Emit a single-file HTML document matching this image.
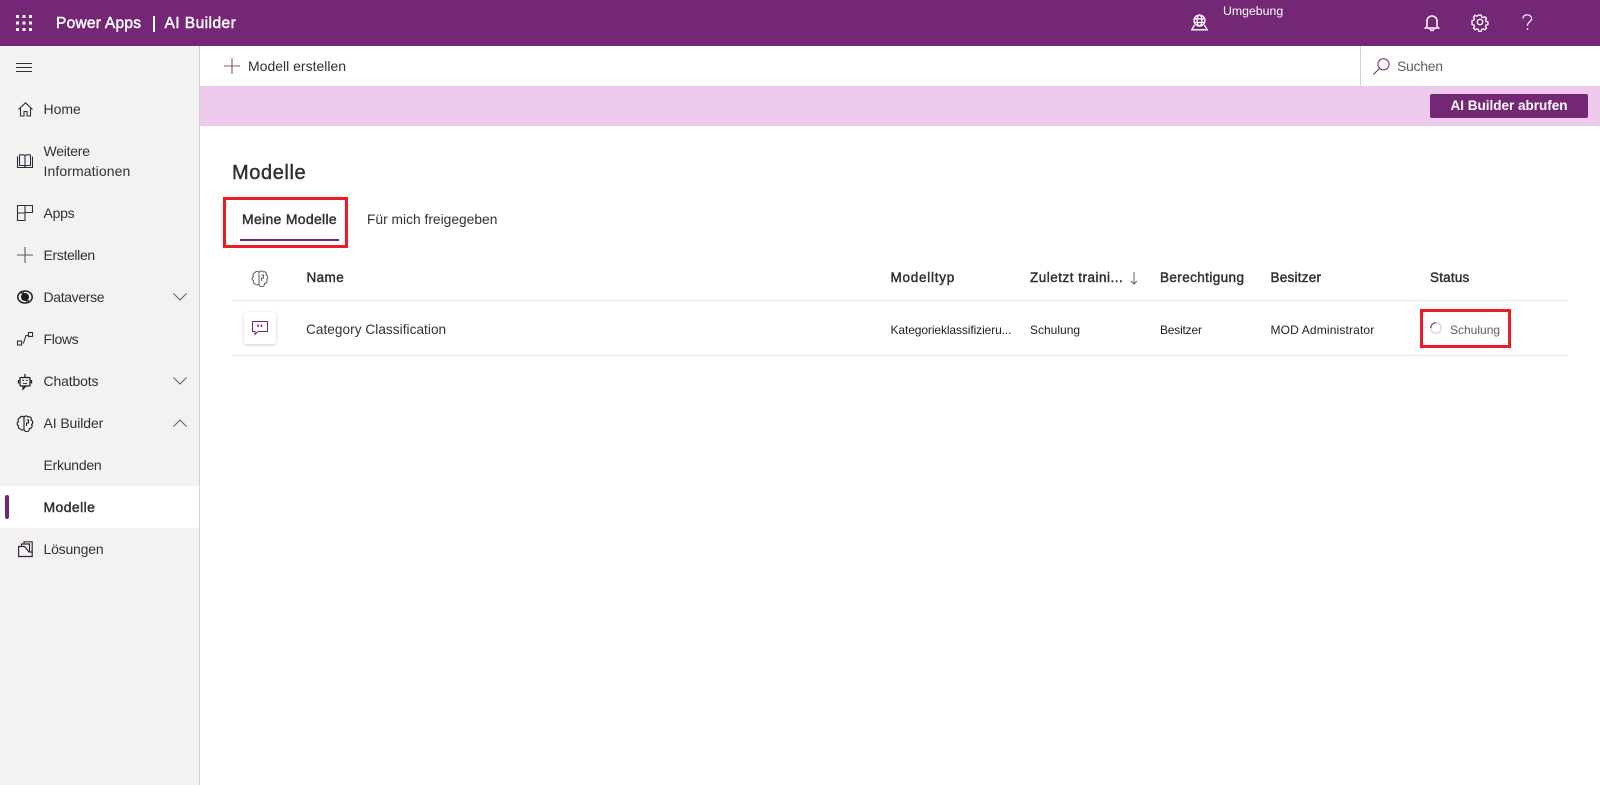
<!DOCTYPE html>
<html lang="de">
<head>
<meta charset="utf-8">
<title>AI Builder</title>
<style>
html,body{margin:0;padding:0;width:1600px;height:785px;overflow:hidden;background:#fff;font-family:"Liberation Sans",Arial,sans-serif;color:#323130}
.a{position:absolute}
.t{position:absolute;white-space:nowrap;line-height:20px;font-size:14px;height:20px}
.s{-webkit-text-stroke:.45px currentColor}
svg{position:absolute;overflow:visible;fill:none}
</style>
</head>
<body>
<div class="a" style="left:0;top:0;width:1600px;height:46px;background:#742774"></div>
<svg style="left:16px;top:15px" width="16" height="16"><g fill="#fff"><rect x="0" y="0" width="3" height="3"/><rect x="6.500" y="0" width="3" height="3"/><rect x="13" y="0" width="3" height="3"/><rect x="0" y="6.500" width="3" height="3"/><rect x="6.500" y="6.500" width="3" height="3"/><rect x="13" y="6.500" width="3" height="3"/><rect x="0" y="13" width="3" height="3"/><rect x="6.500" y="13" width="3" height="3"/><rect x="13" y="13" width="3" height="3"/></g></svg>
<div class="t s" style="left:56px;top:13.500px;color:#fff;font-size:15.500px;letter-spacing:.25px">Power Apps</div>
<div class="a" style="left:153px;top:16px;width:1.500px;height:16px;background:#fff"></div>
<div class="t s" style="left:164.500px;top:13.500px;color:#fff;font-size:15.500px;letter-spacing:.45px">AI Builder</div>
<svg style="left:1191px;top:14px" width="17" height="17" stroke="#fff" stroke-width="1.300"><circle cx="8.500" cy="6.500" r="5.500"/><ellipse cx="8.500" cy="6.500" rx="2.400" ry="5.500"/><path d="M3.200 4.800H13.800M3.200 8.500H13.800M3.500 11L.8 15.800H16.200L13.500 11"/></svg>
<div class="t" style="left:1223px;top:1px;color:#fff;font-size:12.300px">Umgebung</div>
<svg style="left:1424px;top:14px" width="16" height="18" stroke="#fff" stroke-width="1.500"><path d="M3 12.500V7a5 5 0 0 1 10 0v5.500l1.500 1.500H1.500zM6 14.500a2 2 0 0 0 4 0"/></svg>
<svg style="left:1472px;top:14px" width="16" height="16" stroke="#fff" stroke-width="1.400"><circle cx="8" cy="8" r="2.700"/><path d="M6.700 .7h2.600l.4 2 1.500.7 1.800-1 1.800 1.800-1 1.800.6 1.500 2 .5v2.600l-2 .5-.6 1.500 1 1.800-1.800 1.800-1.800-1-1.500.6-.4 2H6.700l-.4-2-1.500-.6-1.800 1-1.800-1.800 1-1.800-.6-1.500-2-.5V6.500l2-.5.6-1.500-1-1.800L2.700 .9l1.800 1 1.500-.7z" transform="translate(.4 .4) scale(.95)"/></svg>
<svg style="left:1522px;top:14px" width="11" height="17" stroke="#fff" stroke-width="1.200"><path d="M1 4.500C1 2 3 .8 5.200 .8C7.800 .8 9.600 2.500 9.600 4.600C9.600 7.600 5.500 8 5.500 11.800"/><circle cx="5.500" cy="15" r=".9" fill="#fff" stroke="none"/></svg>

<div class="a" style="left:0;top:46px;width:199px;height:739px;background:#f3f2f1;border-right:1px solid #d2d0ce"></div>
<svg style="left:16px;top:63px" width="16" height="10" stroke="#323130" stroke-width="1"><path d="M0 .5H16M0 4.500H16M0 8.500H16"/></svg>

<svg style="left:18px;top:102px" width="15" height="15" stroke="#323130" stroke-width="1.100"><path d="M.5 7.500L7.500 .8L14.500 7.500M2.500 6V14H6V9.500H9V14H12.500V6"/></svg>
<div class="t" style="left:43.500px;top:99px">Home</div>

<svg style="left:17px;top:154px" width="16" height="14" stroke="#322b40" stroke-width="1.100"><path d="M.5 2.500V13.500H15.500V2.500"/><path d="M2.500 .8H6Q8 .8 8 2.500V13.500M2.500 .8V11.500H6.500Q8 11.500 8 13.500M13.500 .8H10Q8 .8 8 2.500M13.500 .8V11.500H9.500Q8 11.500 8 13.500"/></svg>
<div class="t" style="left:43.500px;top:141px;letter-spacing:-.25px">Weitere</div>
<div class="t" style="left:43.500px;top:161px;letter-spacing:.1px">Informationen</div>

<svg style="left:17px;top:205px" width="16" height="16" stroke="#323130" stroke-width="1.100"><path d="M.5 .5H15.500V7.500H8V15.500H.5zM.5 8H8M8 .5V8"/></svg>
<div class="t" style="left:43.500px;top:203px;letter-spacing:-.25px">Apps</div>

<svg style="left:17px;top:247px" width="16" height="16" stroke="#5e5c5a" stroke-width="1.100"><path d="M0 8H16M8 0V16"/></svg>
<div class="t" style="left:43.500px;top:245px;letter-spacing:-.35px">Erstellen</div>

<svg style="left:17px;top:289px" width="16" height="16" stroke="#1f1e1d" stroke-width="1.500"><ellipse cx="8" cy="8" rx="7.200" ry="6"/><circle cx="8" cy="8" r="3.300" fill="#1f1e1d"/><path d="M3.500 3.500Q9 6 10 14M12.500 12.500Q7 10 6 2" stroke-width="1"/></svg>
<div class="t" style="left:43.500px;top:287px;letter-spacing:-.35px">Dataverse</div>
<svg style="left:173px;top:293px" width="14" height="8" stroke="#605e5c" stroke-width="1"><path d="M.5 .5L7 7L13.500 .5"/></svg>

<svg style="left:17px;top:332px" width="16" height="14" stroke="#323130" stroke-width="1.100"><rect x=".5" y="9" width="4" height="4"/><rect x="11.500" y=".5" width="4" height="4"/><path d="M5.500 11H6.500L9 3.500H11"/></svg>
<div class="t" style="left:43.500px;top:329px;letter-spacing:-.35px">Flows</div>

<svg style="left:18px;top:374px" width="14" height="16" stroke="#1f1e1d" stroke-width="1.300"><rect x="2" y="3.500" width="10" height="8.500" rx="1"/><path d="M7 0V3.500M.5 6V9.500M13.500 6V9.500M5 12V15L8 12"/><path d="M5 9Q7 10.400 9 9" stroke-width=".9"/><rect x="4.400" y="5.600" width="1.400" height="1.400" fill="#1f1e1d" stroke="none"/><rect x="8.200" y="5.600" width="1.400" height="1.400" fill="#1f1e1d" stroke="none"/></svg>
<div class="t" style="left:43.500px;top:371px;letter-spacing:-.15px">Chatbots</div>
<svg style="left:173px;top:377px" width="14" height="8" stroke="#605e5c" stroke-width="1"><path d="M.5 .5L7 7L13.500 .5"/></svg>

<svg style="left:17px;top:415px" width="16" height="16" stroke="#1f1e1d" stroke-width="1.100"><path d="M7 2.500A2.200 2.200 0 0 0 3 2.800A2.300 2.300 0 0 0 1.500 6.500A2.400 2.400 0 0 0 1.500 10.800A2.300 2.300 0 0 0 3.500 14A2.100 2.100 0 0 0 7 14.200zM7 2.500A2.200 2.200 0 0 1 11 2A2.200 2.200 0 0 1 14 5A2.500 2.500 0 0 1 14.600 9.500A2.500 2.500 0 0 1 12.500 13.500A2.500 2.500 0 0 1 7 14.200M9.500 5H11.500V8H9.500V11"/></svg>
<div class="t" style="left:43.500px;top:413px;letter-spacing:-.1px">AI Builder</div>
<svg style="left:173px;top:419px" width="14" height="8" stroke="#605e5c" stroke-width="1"><path d="M.5 7.500L7 1L13.500 7.500"/></svg>

<div class="t" style="left:43.500px;top:455px;letter-spacing:-.25px">Erkunden</div>
<div class="a" style="left:0;top:486px;width:199px;height:42px;background:#fff"></div>
<div class="a" style="left:5px;top:495px;width:4px;height:24px;background:#742774;border-radius:2px"></div>
<div class="t s" style="left:43.500px;top:497px;letter-spacing:.4px">Modelle</div>

<svg style="left:18px;top:541px" width="15" height="16" stroke="#34283f" stroke-width="1.200"><path d="M.6 5.500H6.500L11 11H14.200V15.500H.6zM3.500 5.500V3H11.500V11M6 3V.8H14.200V11"/></svg>
<div class="t" style="left:43.500px;top:539px;letter-spacing:-.2px">Lösungen</div>

<div class="a" style="left:200px;top:46px;width:1400px;height:40px;background:#fff"></div>
<svg style="left:224px;top:58px" width="16" height="16" stroke="#77597a" stroke-width="1.100"><path d="M0 8H16M8 0V16"/></svg>
<div class="t" style="left:248px;top:56px;font-size:14px">Modell erstellen</div>
<div class="a" style="left:1360px;top:46px;width:1px;height:40px;background:#d2d0ce"></div>
<svg style="left:1373px;top:58px" width="17" height="17" stroke="#742774" stroke-width="1"><circle cx="10.500" cy="6.300" r="5.600"/><path d="M6.500 10.300L.5 16.500"/></svg>
<div class="t" style="left:1397px;top:56px;color:#605e5c;font-size:14px;letter-spacing:-.3px">Suchen</div>

<div class="a" style="left:200px;top:86px;width:1400px;height:40px;background:#edc9ec"></div>
<div class="a" style="left:1430px;top:94px;width:158px;height:24px;background:#742774;border-radius:2px"></div>
<div class="t" style="left:1430px;top:96px;width:158px;text-align:center;color:#fff;font-weight:700;font-size:13.500px">AI Builder abrufen</div>

<div class="t s" style="left:232px;top:162.500px;font-size:20px;color:#323130;letter-spacing:.6px">Modelle</div>

<div class="t s" style="left:242px;top:209px;font-size:14px;letter-spacing:.3px">Meine Modelle</div>
<div class="a" style="left:240px;top:239px;width:99px;height:2px;background:#742774"></div>
<div class="t" style="left:367px;top:209.500px;font-size:13.800px">Für mich freigegeben</div>
<div class="a" style="left:223px;top:197px;width:119px;height:45px;border:3px solid #ed1c24"></div>

<svg style="left:252px;top:270px" width="16" height="16" stroke="#605e5c" stroke-width="1"><path d="M7 2.500A2.200 2.200 0 0 0 3 2.800A2.300 2.300 0 0 0 1.500 6.500A2.400 2.400 0 0 0 1.500 10.800A2.300 2.300 0 0 0 3.500 14A2.100 2.100 0 0 0 7 14.200zM7 2.500A2.200 2.200 0 0 1 11 2A2.200 2.200 0 0 1 14 5A2.500 2.500 0 0 1 14.600 9.500A2.500 2.500 0 0 1 12.500 13.500A2.500 2.500 0 0 1 7 14.200M9.500 5H11.500V8H9.500V11"/></svg>
<div class="t s" style="left:306.500px;top:268px;font-size:13.500px;letter-spacing:.4px">Name</div>
<div class="t s" style="left:890.500px;top:268px;font-size:13.500px;letter-spacing:.75px">Modelltyp</div>
<div class="t s" style="left:1030px;top:268px;font-size:13.500px;letter-spacing:.5px">Zuletzt traini...</div>
<svg style="left:1130px;top:272px" width="8" height="13" stroke="#77597a" stroke-width="1"><path d="M4 0V12M1 9L4 12L7 9"/></svg>
<div class="t s" style="left:1160px;top:268px;font-size:13.500px;letter-spacing:.4px">Berechtigung</div>
<div class="t s" style="left:1270.500px;top:268px;font-size:13.500px;letter-spacing:.25px">Besitzer</div>
<div class="t s" style="left:1430px;top:268px;font-size:13.500px;letter-spacing:.2px">Status</div>
<div class="a" style="left:232px;top:300px;width:1336px;height:1px;background:#edebe9"></div>

<div class="a" style="left:244px;top:312px;width:32px;height:32px;background:#fff;border-radius:3px;box-shadow:0 1px 3px rgba(0,0,0,.2)"></div>
<svg style="left:252px;top:321px" width="16" height="15" stroke="#742774" stroke-width="1"><path d="M.5 .5H15.500V10.500H6L3 13.500V10.500H.5z"/><path d="M6 3.500V6M9.500 3.500V6" stroke-width="1.500"/></svg>
<div class="t" style="left:306px;top:319.500px;font-size:13.600px;letter-spacing:.05px">Category Classification</div>
<div class="t" style="left:890.500px;top:319.500px;font-size:12px;color:#201f1e;letter-spacing:-.1px">Kategorieklassifizieru...</div>
<div class="t" style="left:1030px;top:319.500px;font-size:12px;color:#201f1e">Schulung</div>
<div class="t" style="left:1160px;top:319.500px;font-size:12px;color:#201f1e;letter-spacing:-.2px">Besitzer</div>
<div class="t" style="left:1270.500px;top:319.500px;font-size:12px;color:#201f1e;letter-spacing:.15px">MOD Administrator</div>
<svg style="left:1430px;top:322px" width="12" height="12" stroke-width="1.400"><circle cx="6" cy="6" r="5.300" stroke="#edc9ec"/><path d="M.7 6A5.300 5.300 0 0 1 6 .7" stroke="#8f5a8f"/></svg>
<div class="t" style="left:1450px;top:319.500px;font-size:12px;color:#605e5c">Schulung</div>
<div class="a" style="left:1420px;top:309px;width:85px;height:33px;border:3px solid #ed1c24"></div>
<div class="a" style="left:232px;top:355px;width:1336px;height:1px;background:#edebe9"></div>
</body>
</html>
